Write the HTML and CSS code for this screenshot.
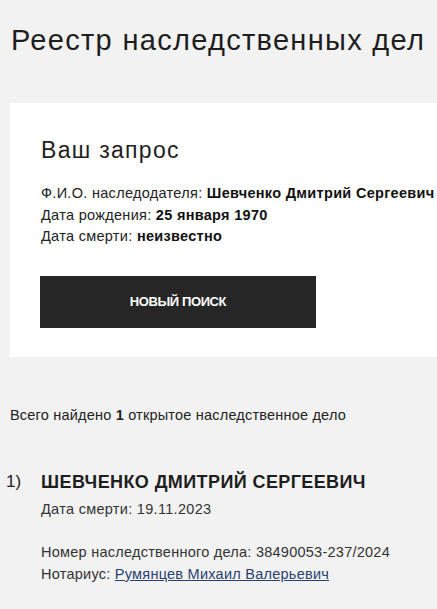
FILE: index.html
```html
<!DOCTYPE html>
<html lang="ru">
<head>
<meta charset="utf-8">
<link rel="stylesheet" href="styles.css">
</head>
<body>
<main class="page">
  <h1 class="title">Реестр наследственных дел</h1>
  <section class="card">
    <h2 class="card-title">Ваш запрос</h2>
    <div class="query">
      <div>Ф.И.О. наследодателя: <b>Шевченко Дмитрий Сергеевич</b></div>
      <div>Дата рождения: <b>25 января 1970</b></div>
      <div>Дата смерти: <b>неизвестно</b></div>
    </div>
    <button class="btn" type="button">НОВЫЙ ПОИСК</button>
  </section>
  <p class="count">Всего найдено <b>1</b> открытое наследственное дело</p>
  <ol class="results">
    <li class="result">
      <span class="num">1)</span>
      <div class="result-body">
        <div class="name">ШЕВЧЕНКО ДМИТРИЙ СЕРГЕЕВИЧ</div>
        <div class="death">Дата смерти: 19.11.2023</div>
        <div class="meta">
          <div>Номер наследственного дела: 38490053-237/2024</div>
          <div>Нотариус: <a href="#" class="link">Румянцев Михаил Валерьевич</a></div>
        </div>
      </div>
    </li>
  </ol>
</main>
</body>
</html>
```
FILE: styles.css
```css
html, body {
  margin: 0;
  padding: 0;
  background: #f2f2f2;
}
body {
  font-family: "Liberation Sans", Arial, sans-serif;
  color: #222;
  overflow: hidden;
}
.page {
  padding: 0 0 0 10px;
}
.title {
  margin: 0;
  padding: 22px 0 0 1px;
  font-size: 29px;
  font-weight: normal;
  letter-spacing: 1.3px;
  line-height: 36px;
  color: #1e1e1e;
  white-space: nowrap;
}
.card {
  margin-top: 45px;
  background: #fff;
  padding: 32px 0 29px 31px;
  height: 254px;
  box-sizing: border-box;
}
.card-title {
  margin: 0;
  font-size: 23px;
  font-weight: normal;
  letter-spacing: 1.3px;
  line-height: 30px;
  color: #1e1e1e;
}
.query {
  margin-top: 18px;
  font-size: 14.5px;
  letter-spacing: 0.3px;
  line-height: 21.5px;
  color: #222;
  white-space: nowrap;
}
.query b {
  font-weight: bold;
  color: #111;
}
.btn {
  display: block;
  margin-top: 28px;
  margin-left: -1px;
  width: 276px;
  height: 52px;
  background: #262626;
  border: 0;
  color: #fff;
  font-family: "Liberation Sans", Arial, sans-serif;
  font-weight: bold;
  font-size: 13px;
  letter-spacing: -0.4px;
  padding: 0;
}
.count {
  margin: 48px 0 0 0;
  font-size: 14.5px;
  letter-spacing: 0.2px;
  line-height: 20px;
  color: #222;
}
.results {
  list-style: none;
  margin: 44px 0 0 -4px;
  padding: 0;
}
.result {
  display: flex;
  align-items: flex-start;
}
.num {
  width: 35px;
  font-size: 17px;
  line-height: 26px;
  color: #222;
}
.name {
  font-size: 18px;
  font-weight: bold;
  letter-spacing: 0.4px;
  line-height: 26px;
  color: #1e1e1e;
}
.death {
  margin-top: 4px;
  font-size: 14.5px;
  letter-spacing: 0.3px;
  line-height: 20px;
  color: #333;
}
.meta {
  margin-top: 22px;
  font-size: 14.5px;
  letter-spacing: 0.25px;
  line-height: 22px;
  color: #333;
}
.link {
  color: #2a4170;
  text-decoration: underline;
}
```
